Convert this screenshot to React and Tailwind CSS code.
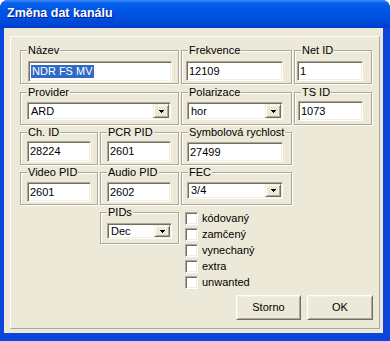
import React from 'react';

const font = "font-['Liberation_Sans',Arial,sans-serif]";

const Arrow = () => (
  <svg width="5" height="3" viewBox="0 0 5 3" shapeRendering="crispEdges">
    <rect x="0" y="0" width="5" height="1" fill="#000" />
    <rect x="1" y="1" width="3" height="1" fill="#000" />
    <rect x="2" y="2" width="1" height="1" fill="#000" />
  </svg>
);

const Group = ({ label, className = '', children }) => (
  <fieldset className={`border border-[#aca899] shadow-[inset_1px_1px_0_#fff,1px_1px_0_#fff] ${className}`}>
    <legend className="ml-[6px] px-[1px] bg-[#ece9d8] text-[11px] leading-[13px] text-black">{label}</legend>
    {children}
  </fieldset>
);

const Edit = ({ value, className = '', selected }) => (
  <div className={`flex items-center bg-white border border-t-[#aca899] border-l-[#aca899] border-r-white border-b-white shadow-[inset_1px_1px_0_#716f64,inset_-1px_-1px_0_#f1efe2] pl-[2px] text-[11px] leading-[13px] text-black ${className}`}>
    {selected ? <span className="bg-[#316ac5] text-white px-[1px]">{value}</span> : <span>{value}</span>}
  </div>
);

const Combo = ({ value, className = '' }) => (
  <div className={`flex items-center bg-white border border-t-[#aca899] border-l-[#aca899] border-r-white border-b-white shadow-[inset_1px_1px_0_#716f64,inset_-1px_-1px_0_#f1efe2] p-[1px] pl-[3px] text-[11px] leading-[13px] text-black ${className}`}>
    <span className="flex-1">{value}</span>
    <div className="w-[16px] h-full flex items-center justify-center bg-[#ece9d8] border border-t-[#f1efe2] border-l-[#f1efe2] border-r-[#716f64] border-b-[#716f64] shadow-[inset_1px_1px_0_#fff,inset_-1px_-1px_0_#aca899]">
      <Arrow />
    </div>
  </div>
);

const Check = ({ label }) => (
  <div className="h-[16px] flex items-start gap-[4px]">
    <div className="w-[13px] h-[13px] bg-white border border-t-[#aca899] border-l-[#aca899] border-r-white border-b-white shadow-[inset_1px_1px_0_#716f64,inset_-1px_-1px_0_#f1efe2]" />
    <span className="text-[11px] leading-[13px] text-black">{label}</span>
  </div>
);

const Button = ({ label, className = '' }) => (
  <button className={`h-[25px] bg-[#ece9d8] border border-t-white border-l-white border-r-[#716f64] border-b-[#716f64] shadow-[inset_1px_1px_0_#f1efe2,inset_-1px_-1px_0_#aca899] text-[11px] text-black ${className}`}>
    {label}
  </button>
);

const App = () => {
  return (
    <div className={`w-[390px] h-[341px] flex flex-col bg-[#0b45db] rounded-t-[8px] overflow-hidden ${font}`}>
      <div className="h-[28px] shrink-0 flex items-start pt-[6px] pl-[7px] bg-[linear-gradient(to_bottom,#3d8bff_0px,#0a63ec_3px,#0058e6_9px,#0050e0_18px,#0044d3_25px,#003cc6_28px)]">
        <span className="text-white font-bold text-[12.5px] leading-[15px] [text-shadow:1px_1px_#0a1a8a]">Změna dat kanálu</span>
      </div>
      <div className="flex-1 flex flex-col ml-[4px] mr-[7px] mb-[8px] bg-[#ece9d8] pt-[8px] pl-[6px] pr-[3px] pb-[4px]">
        <div className="flex-1 flex flex-col border border-t-white border-l-white border-r-[#aca899] border-b-[#aca899] pt-[7px] pl-[9px] pr-[6px]">
          <div className="flex gap-[2px] h-[40px]">
            <Group label="Název" className="w-[159px]">
              <Edit value="NDR FS MV" selected className="w-[144px] h-[21px] ml-[7px] mt-[4px]" />
            </Group>
            <Group label="Frekvence" className="w-[111px]">
              <Edit value="12109" className="w-[97px] h-[20px] ml-[4px] mt-[4px]" />
            </Group>
            <Group label="Net ID" className="w-[78px]">
              <Edit value="1" className="w-[66px] h-[20px] ml-[2px] mt-[4px]" />
            </Group>
          </div>
          <div className="flex gap-[2px] h-[39px] mt-[2px]">
            <Group label="Provider" className="w-[159px]">
              <Combo value="ARD" className="w-[144px] h-[18px] ml-[6px] mt-[3px]" />
            </Group>
            <Group label="Polarizace" className="w-[111px]">
              <Combo value="hor" className="w-[96px] h-[18px] ml-[5px] mt-[3px]" />
            </Group>
            <Group label="TS ID" className="w-[78px]">
              <Edit value="1073" className="w-[65px] h-[20px] ml-[3px] mt-[2px]" />
            </Group>
          </div>
          <div className="flex gap-[2px] h-[39px] mt-[1px]">
            <Group label="Ch. ID" className="w-[78px]">
              <Edit value="28224" className="w-[64px] h-[21px] ml-[6px] mt-[2px]" />
            </Group>
            <Group label="PCR PID" className="w-[79px]">
              <Edit value="2601" className="w-[64px] h-[21px] ml-[6px] mt-[2px]" />
            </Group>
            <Group label="Symbolová rychlost" className="w-[111px]">
              <Edit value="27499" className="w-[96px] h-[20px] ml-[5px] mt-[3px]" />
            </Group>
          </div>
          <div className="flex gap-[2px] h-[39px] mt-[1px]">
            <Group label="Video PID" className="w-[78px]">
              <Edit value="2601" className="w-[64px] h-[20px] ml-[6px] mt-[3px]" />
            </Group>
            <Group label="Audio PID" className="w-[79px]">
              <Edit value="2602" className="w-[64px] h-[20px] ml-[6px] mt-[3px]" />
            </Group>
            <Group label="FEC" className="w-[111px]">
              <Combo value="3/4" className="w-[96px] h-[17px] ml-[5px] mt-[3px]" />
            </Group>
          </div>
          <div className="flex gap-[2px] mt-[1px]">
            <div className="w-[78px]" />
            <Group label="PIDs" className="w-[79px] h-[38px]">
              <Combo value="Dec" className="w-[65px] h-[16px] ml-[6px] mt-[4px]" />
            </Group>
            <div className="flex flex-col ml-[4px] pt-[6px]">
              <Check label="kódovaný" />
              <Check label="zamčený" />
              <Check label="vynechaný" />
              <Check label="extra" />
              <Check label="unwanted" />
            </div>
          </div>
          <div className="flex justify-end gap-[6px] mt-[3px]">
            <Button label="Storno" className="w-[65px]" />
            <Button label="OK" className="w-[66px]" />
          </div>
        </div>
      </div>
    </div>
  );
};

export default App;
